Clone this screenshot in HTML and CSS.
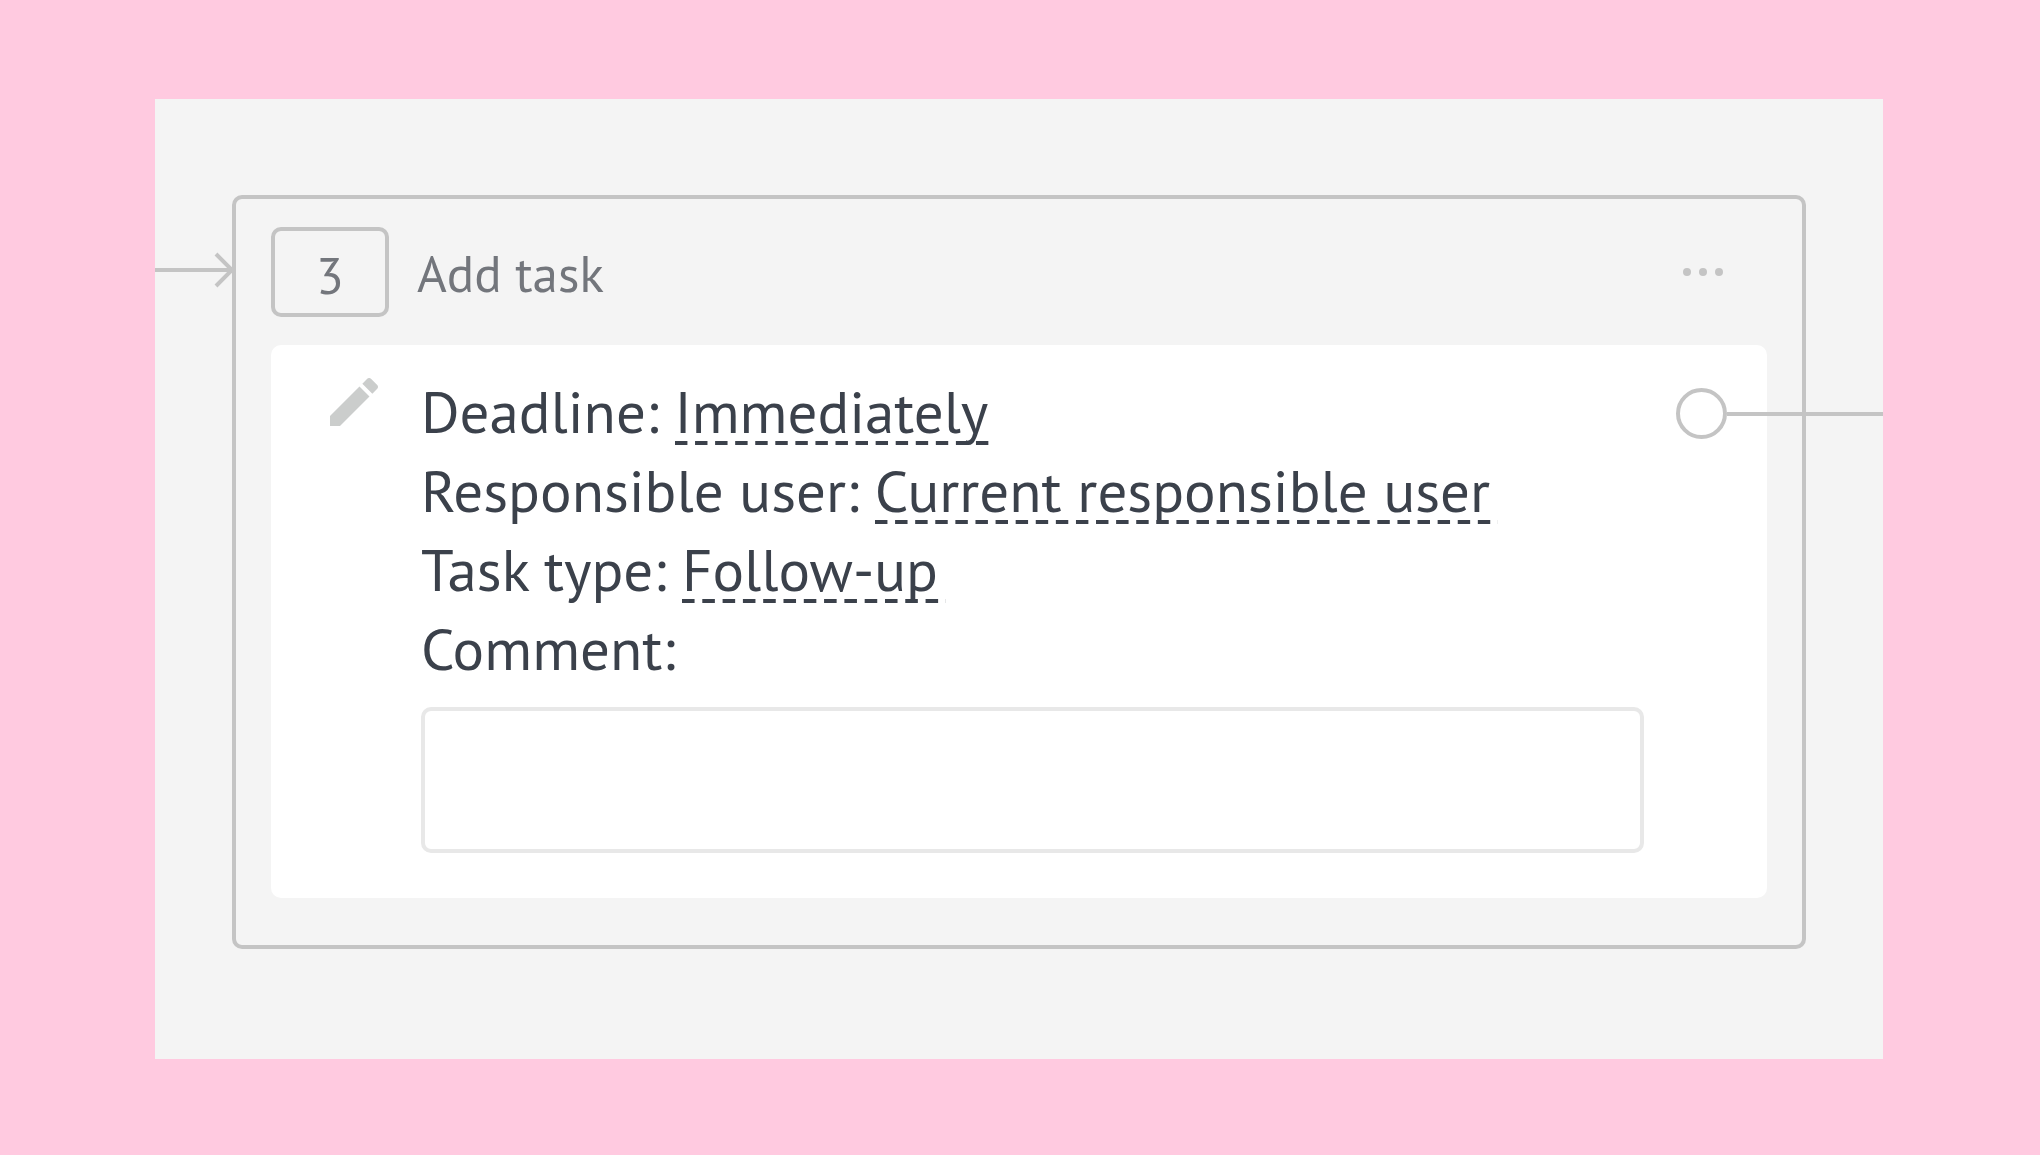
FILE: index.html
```html
<!DOCTYPE html>
<html lang="en">
<head>
<meta charset="utf-8">
<meta name="viewport" content="width=device-width, initial-scale=1">
<title>Add task</title>
<link rel="stylesheet" href="styles.css">
</head>
<body>
<main class="stage">
  <svg class="arrow" viewBox="0 0 77 40" aria-hidden="true"><path d="M0 20H76M61 4l16 16-16 16"/></svg>
  <section class="card">
    <header class="card-head">
      <span class="step">3</span>
      <h1 class="title">Add task</h1>
      <button class="more" type="button" aria-label="More actions">
        <svg class="dots" viewBox="0 0 40 8" aria-hidden="true"><circle cx="4" cy="4" r="4"/><circle cx="20" cy="4" r="4"/><circle cx="36" cy="4" r="4"/></svg>
      </button>
    </header>
    <form class="panel">
      <button class="edit" type="button" aria-label="Edit task">
        <svg class="pencil" viewBox="3 3 18 18" aria-hidden="true"><path d="M3 17.25V21h3.75L17.81 9.94l-3.75-3.75L3 17.25zM20.71 7.04c.39-.39.39-1.02 0-1.41l-2.34-2.34c-.39-.39-1.02-.39-1.41 0l-1.83 1.83 3.75 3.75 1.83-1.83z"/></svg>
      </button>
      <div class="fields">
        <p class="row">Deadline: <button class="value" type="button">Immediately</button></p>
        <p class="row">Responsible user: <button class="value" type="button">Current responsible user</button></p>
        <p class="row">Task type: <button class="value" type="button">Follow-up</button></p>
        <label class="row" for="comment">Comment:</label>
        <textarea class="comment" id="comment"></textarea>
      </div>
      <div class="output"><span class="wire"></span><span class="port"></span></div>
    </form>
  </section>
</main>
</body>
</html>
```
FILE: styles.css
```css
* {
  box-sizing: border-box;
}

body {
  margin: 0;
  padding: 99px 157px 96px 155px;
  background: #ffcae0;
  color: #3b414b;
  font-family: "PT Sans", Lato, sans-serif;
}

button {
  padding: 0;
  border: 0;
  background: none;
  color: inherit;
  font: inherit;
  cursor: pointer;
}

svg {
  display: block;
}

.stage {
  position: relative;
  padding: 96px 77px 110px;
  background: #f4f4f4;
}

.arrow {
  position: absolute;
  left: 0;
  top: 151px;
  width: 77px;
  fill: none;
  stroke: #c4c4c4;
  stroke-width: 4;
}

.card {
  padding: 28px 35px 47px;
  border: 4px solid #c4c4c4;
  border-radius: 10px;
}

.card-head {
  display: flex;
  align-items: center;
  gap: 28px;
  color: #73767c;
}

.step {
  width: 118px;
  height: 90px;
  border: 4px solid #c4c4c4;
  border-radius: 10px;
  font-size: 51px;
  line-height: 88px;
  text-align: center;
}

.title {
  margin: 0;
  padding-top: 2px;
  font-size: 51px;
  font-weight: 400;
  line-height: 88px;
}

.more {
  margin-left: auto;
  padding: 16px 44px;
}

.dots {
  width: 40px;
  fill: #c4c4c4;
}

.panel {
  position: relative;
  display: flex;
  margin-top: 28px;
  padding: 27px 123px 45px 59px;
  border-radius: 10px;
  background: #fff;
}

.edit {
  flex: none;
  align-self: flex-start;
  width: 91px;
  padding-top: 6px;
}

.pencil {
  width: 48px;
  fill: #cbcdcc;
}

.fields {
  flex: 1;
}

.row {
  display: block;
  margin: 0;
  font-size: 59px;
  line-height: 79px;
}

.value {
  position: relative;
  line-height: 68px;
}

/* Whole dashes only: the last gap falls in the 8px past the text. */
.value::after {
  content: "";
  position: absolute;
  right: -8px;
  bottom: 0;
  left: 0;
  height: 4px;
  background: linear-gradient(90deg, #3b414b 60%, transparent 60%) 0 0 / 20px 4px round;
}

.comment {
  display: block;
  width: 100%;
  height: 146px;
  margin-top: 19px;
  padding: 16px;
  border: 4px solid #e8e8e8;
  border-radius: 10px;
  background: none;
  color: inherit;
  font: inherit;
  font-size: 51px;
  resize: none;
}

/* The output connector runs over the card's edge to the stage's edge. */
.output {
  position: absolute;
  top: 43px;
  right: -116px;
  display: flex;
  flex-direction: row-reverse;
  align-items: center;
}

.port {
  width: 51px;
  height: 51px;
  border: 4px solid #c4c4c4;
  border-radius: 50%;
}

.wire {
  width: 156px;
  height: 4px;
  background: #c4c4c4;
}
```
